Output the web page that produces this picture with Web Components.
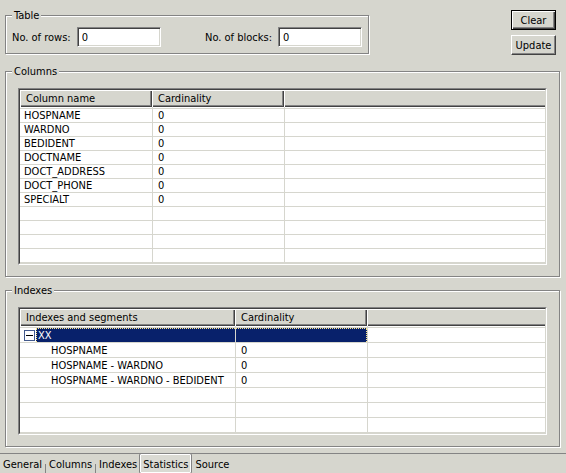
<!DOCTYPE html>
<html lang="en">
<head>
<meta charset="utf-8">
<title>Table statistics</title>
<style>
  html, body { margin: 0; min-height: 100%; background: #d6d6ce; }
  body { font: 11px/13px "DejaVu Sans Condensed", "DejaVu Sans", sans-serif; color: #000; }
</style>
</head>
<body>
<stat-page></stat-page>

<script>
const define = (name, html, setup) => {
  const template = document.createElement('template');
  template.innerHTML = html;
  customElements.define(name, class extends HTMLElement {
    constructor() {
      super();
      this.attachShadow({ mode: 'open' }).append(template.content.cloneNode(true));
    }
    connectedCallback() {
      if (setup && !this.ready) { this.ready = true; setup(this, this.shadowRoot); }
    }
  });
};

define('group-box', `
  <style>
    :host { display: block; }
    fieldset {
      margin: 0 1px 1px 0; padding: 0 12px var(--pad-bottom, 11px); min-width: 0;
      border: 1px solid #848484;
      box-shadow: 1px 1px 0 #fff, inset 1px 1px 0 #fff;
    }
    legend { margin-left: -6px; padding: 0 2px; background: #d6d6ce; }
  </style>
  <fieldset><legend></legend><slot></slot></fieldset>`,
  (host, root) => { root.querySelector('legend').textContent = host.getAttribute('label'); });

define('number-field', `
  <style>
    :host { display: block; }
    label { display: flex; align-items: center; justify-content: space-between; gap: 6px; }
    input {
      box-sizing: border-box; width: 84px; height: 20px; margin: 0; padding: 0 4px;
      border: 1px solid; border-color: #848484 #fff #fff #848484; border-radius: 0;
      box-shadow: inset 1px 1px 0 #424242, inset -1px -1px 0 #d6d6ce;
      background: #fff; color: #000; font: inherit; outline: 0;
    }
  </style>
  <label><span></span><input type="text" inputmode="numeric"></label>`,
  (host, root) => {
    root.querySelector('span').textContent = host.getAttribute('label');
    root.querySelector('input').value = host.getAttribute('value');
  });

define('push-button', `
  <style>
    :host { display: block; }
    button {
      display: block; box-sizing: border-box; width: 100%; height: 20px; margin: 0; padding: 0;
      border: 1px solid; border-color: #fff #424242 #424242 #fff; border-radius: 0;
      box-shadow: inset -1px -1px 0 #848484;
      background: #d6d6ce; color: #000; font: inherit;
    }
    :host([default]) button {
      border-color: #000;
      box-shadow: inset 1px 1px 0 #fff, inset -1px -1px 0 #424242, inset -2px -2px 0 #848484;
    }
  </style>
  <button type="button"><slot></slot></button>`);

define('data-grid', `
  <style>
    :host { display: block; }
    .frame {
      border: 1px solid; border-color: #848484 #fff #fff #848484;
    }
    .sunken {
      border: 1px solid; border-color: #424242 #d6d6ce #d6d6ce #424242;
      background: #fff;
    }
    table { width: 100%; table-layout: fixed; border-collapse: separate; border-spacing: 0; }
    th, td {
      box-sizing: border-box; padding: 0; text-align: left; font-weight: normal;
      white-space: nowrap; overflow: hidden;
    }
    th {
      height: 17px; padding: 1px 0 0 6px; line-height: 14px; background: #d6d6ce;
      box-shadow: inset 1px 1px 0 #fff, inset -1px -1px 0 #424242, inset -2px -2px 0 #848484;
    }
    th:last-child { box-shadow: inset 1px 1px 0 #fff, inset 0 -1px 0 #424242, inset 0 -2px 0 #848484; }
    td {
      height: var(--row, 14px); padding: 0 0 0 5px; line-height: 13px;
      border-bottom: 1px solid #d6d6ce; border-left: 1px solid #d6d6ce;
    }
    td:first-child { border-left: 0; padding-left: 4px; }
    tr.lead td { height: 2px; line-height: 0; }
    tr.child td:first-child { padding-left: 31px; }
    .node { display: flex; gap: 1px; height: 14px; }
    .node button {
      flex: none; width: 11px; height: 11px; margin: 2px 0 0; padding: 0; border: 0; background: none;
    }
    .node svg { display: block; }
    .node span {
      flex: 1; padding-left: 1px; line-height: 13px; background: #08216b; color: #fff;
      border: 1px dotted #ffe784; border-right: 0; border-bottom: 0; box-sizing: border-box;
    }
    tr.selected td:nth-child(2) { padding-left: 0; background: #08216b; background-clip: padding-box; }
    tr.selected td:nth-child(2) div {
      height: 14px; box-sizing: border-box;
      border: 1px dotted #ffe784; border-left: 0; border-bottom: 0;
    }
  </style>
  <div class="frame"><div class="sunken">
    <table>
      <colgroup><col class="first"><col class="second"><col></colgroup>
      <thead><tr></tr></thead>
      <tbody></tbody>
    </table>
  </div></div>`,
  (host, root) => {
    const data = JSON.parse(host.querySelector('script').textContent);
    root.querySelector('.first').style.width = data.widths[0] + 'px';
    root.querySelector('.second').style.width = data.widths[1] + 'px';
    const head = root.querySelector('thead tr');
    for (const title of [...data.columns, '']) {
      const th = document.createElement('th');
      th.scope = 'col';
      th.textContent = title;
      head.append(th);
    }
    const body = root.querySelector('tbody');
    const addRow = (name = '', value = '', kind = '') => {
      const tr = document.createElement('tr');
      tr.className = kind;
      for (const text of [name, value, '']) {
        const td = document.createElement('td');
        td.textContent = text;
        tr.append(td);
      }
      if (kind === 'selected') {
        tr.firstChild.innerHTML = `<div class="node">
          <button type="button" aria-label="Collapse" aria-expanded="true">
            <svg width="11" height="11" viewBox="0 0 11 11" shape-rendering="crispEdges">
              <rect x=".5" y=".5" width="10" height="10" fill="#fff" stroke="#42598c"/>
              <path d="M2 5.5h7" stroke="#000"/>
            </svg>
          </button><span></span></div>`;
        tr.querySelector('span').textContent = name;
        tr.children[1].append(document.createElement('div'));
      }
      body.append(tr);
    };
    addRow('', '', 'lead');
    data.rows.forEach(row => addRow(...row));
    for (let i = 0; i < data.blank; i++) addRow();
  });

define('tab-strip', `
  <style>
    :host { display: block; border-top: 1px solid #848484; }
    nav { display: flex; height: 19px; }
    ::slotted(tab-item) { flex: none; }
  </style>
  <nav role="tablist"><slot></slot></nav>`);

define('tab-item', `
  <style>
    :host { display: flex; align-items: flex-end; }
    button {
      height: 19px; margin: 0; padding: 2px 3px 0; border: 0; background: none;
      color: #000; font: inherit;
    }
    i { width: 1px; height: 9px; background: #848484; }
    :host([selected]) button {
      padding: 1px 2px 0; border: 1px solid #fff; border-radius: 1px;
      box-shadow: -1px 0 0 #848484, 1px 0 0 #848484; background: #dadad3;
    }
    :host([selected]) { margin-right: 1px; }
    :host([plain]) i, :host([selected]) i { display: none; }
  </style>
  <button type="button" role="tab"><slot></slot></button><i></i>`,
  (host, root) => root.querySelector('button').setAttribute('aria-selected', host.hasAttribute('selected')));

define('stat-page', `
  <style>
    :host { display: block; }
    main { display: grid; gap: 6px; padding: 9px 5px 5px; }
    header { display: flex; justify-content: space-between; align-items: flex-start; margin-bottom: 4px; }
    .totals { flex: 0 1 365px; --pad-bottom: 6px; }
    .fields { display: flex; justify-content: space-between; padding: 5px 0 0; margin: 0 -6px; }
    .actions { display: grid; gap: 5px; width: 45px; margin: 1px 5px 0 0; }
    .tall { --row: 15px; }
    data-grid { margin-top: 10px; }
  </style>
  <main>
    <header>
      <group-box class="totals" label="Table">
        <div class="fields">
          <number-field label="No. of rows:" value="0"></number-field>
          <number-field label="No. of blocks:" value="0"></number-field>
        </div>
      </group-box>
      <div class="actions">
        <push-button default>Clear</push-button>
        <push-button>Update</push-button>
      </div>
    </header>
    <group-box label="Columns">
      <data-grid>
        <script type="application/json">
          {"widths": [132, 132], "columns": ["Column name", "Cardinality"], "blank": 4,
           "rows": [["HOSPNAME", 0], ["WARDNO", 0], ["BEDIDENT", 0], ["DOCTNAME", 0],
                    ["DOCT_ADDRESS", 0], ["DOCT_PHONE", 0], ["SPECIALT", 0]]}
        <\/script>
      </data-grid>
    </group-box>
    <group-box label="Indexes">
      <data-grid class="tall">
        <script type="application/json">
          {"widths": [215, 132], "columns": ["Indexes and segments", "Cardinality"], "blank": 3,
           "rows": [["XX", "", "selected"], ["HOSPNAME", 0, "child"], ["HOSPNAME - WARDNO", 0, "child"],
                    ["HOSPNAME - WARDNO - BEDIDENT", 0, "child"]]}
        <\/script>
      </data-grid>
    </group-box>
  </main>
  <tab-strip>
    <tab-item>General</tab-item>
    <tab-item>Columns</tab-item>
    <tab-item plain>Indexes</tab-item>
    <tab-item selected>Statistics</tab-item>
    <tab-item plain>Source</tab-item>
  </tab-strip>`);
</script>
</body>
</html>
